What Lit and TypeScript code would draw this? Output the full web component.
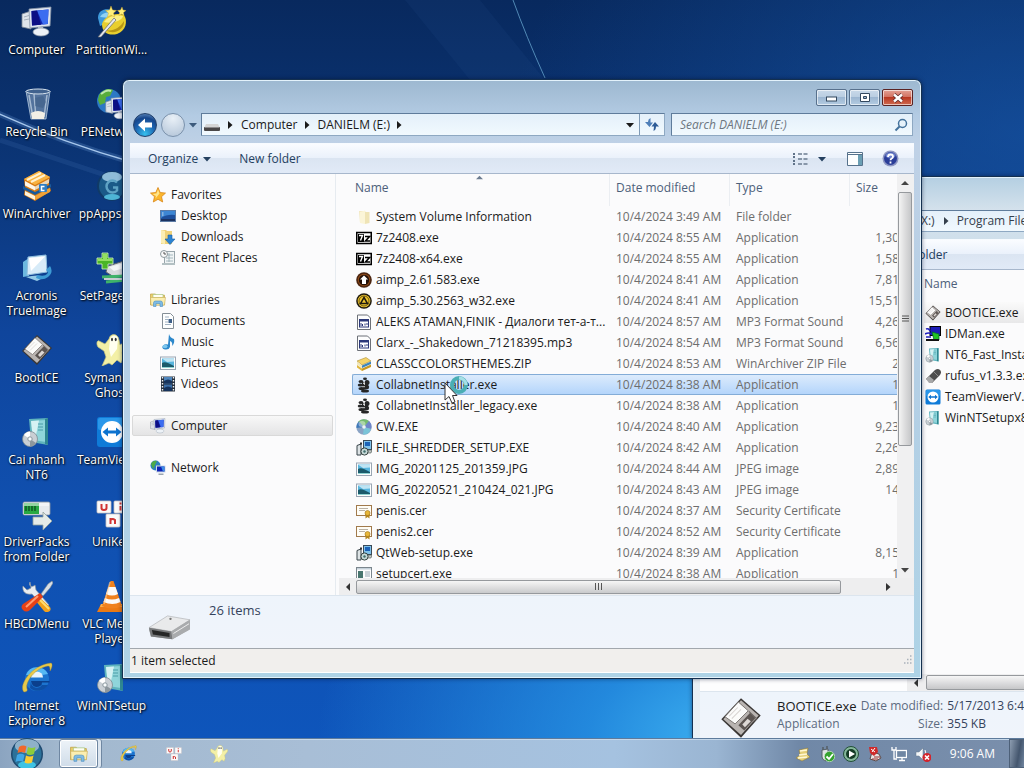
import { LitElement, html, svg, css, TemplateResult } from "lit";
import { customElement, property } from "lit/decorators.js";

const floppy = svg`
  <path d="M16 1 31 14 16 31 1 17Z" fill="#3a3634"/>
  <path d="M16 2.500 29.500 14 16 29 2.500 17Z" fill="#b9b4b1"/>
  <path d="M14 3.800 21.500 10.500 11.500 20.500 3.800 15Z" fill="#fbfbfa" stroke="#77716e" stroke-width=".7"/>
  <path d="M7 14.500 13.500 8M9 16.500 16 9.500" stroke="#d8d4d2" stroke-width=".8"/>
  <path d="M23 12 27 16 18.500 25.500 14 21.500Z" fill="#5c5552"/>
  <path d="M21 16.500 23.500 18.500 19 23 17 21Z" fill="#ddd8d5"/>
  <path d="M22 11 28 16.500 25 19" fill="none" stroke="#6b6562" stroke-width=".8"/>`;

const monitor = svg`
  <path d="M1 8 10 5V23L1 21Z" fill="#dfe4ea" stroke="#7d8895" stroke-width=".8"/>
  <path d="M3 11 8 9.500M3 14 8 13" stroke="#97a2ae" stroke-width=".8"/>
  <path d="M8 3 30 1 29 20 9 22Z" fill="#dfe6f0" stroke="#8793a6" stroke-width=".8"/>
  <path d="M10.500 5 27.500 3.500 26.800 18 11 19.500Z" fill="#1329b4"/>
  <path d="M16 4.600 27.500 3.500 26.800 18 22 18.500Z" fill="#3b6df0"/>
  <path d="M10.500 5 16 4.600 20 18.700 11 19.500Z" fill="#0c0f84"/>
  <path d="M17 21h5l1 4h-6z" fill="#b8c2cf"/>
  <ellipse cx="20" cy="26" rx="8" ry="4" fill="#edf2f7" stroke="#8c98a6" stroke-width=".7"/>`;

const serverBox = svg`
  <path d="M8 3 27 2V29L10 26Z" fill="#5fb4bd"/>
  <path d="M10 5 25 4V26L12 24Z" fill="#8fd5da"/>
  <path d="M10 5 18 4.500 14 24 12 24Z" fill="#d6f2f3"/>
  <path d="M24 3 27 2V29L24 28Z" fill="#2f8791"/>
  <path d="M17 8h5M17 11h5M17 14h5" stroke="#4b9da8"/>
  <circle cx="9" cy="23" r="7.500" fill="#c9cfd4" stroke="#7c8a92" stroke-width=".8"/>
  <path d="M9 23 3 19A7.500 7.500 0 0 1 9 15.500Z" fill="#fff"/>
  <path d="M9 23 15 27A7.500 7.500 0 0 1 9 30.500Z" fill="#8d979d"/>
  <circle cx="9" cy="23" r="2.200" fill="#f7fbfc" stroke="#89969d"/>`;

const teamviewer = svg`
  <rect x="1" y="1" width="30" height="30" rx="3" fill="#0f7bd8"/>
  <rect x="2" y="2" width="28" height="12" rx="2" fill="#2a97ea"/>
  <circle cx="16" cy="16" r="11" fill="#fff"/>
  <path d="M6.500 16 12 11.500v3h8v-3l5.500 4.500-5.500 4.500v-3h-8v3z" fill="#0d73cf"/>`;

const ie = svg`
  <circle cx="16" cy="17" r="12" fill="#1c74cf"/>
  <path d="M5 13a12 12 0 0 1 22-1l-6 1a6 6 0 0 0-11 0z" fill="#55b8f3"/>
  <path d="M10 15.500h12a6 6 0 0 0-12 0z" fill="#e8f4fd"/>
  <path d="M10 19h18.500v1.500H21l-.5 2.500q-4 3.500-8 1-2-2-2.500-5z" fill="#0b3f8c"/>
  <path d="M10 19a6 6 0 0 0 11 4h6a12 12 0 0 1-18 3z" fill="#0d4fa6"/>
  <path d="M3 30C-3 24 10 3 30 1c2 1 1 5-1 8 0-3 0-5-2-5C14 6 4 20 6 27c1 2-1 3-3 3z" fill="#e8c94b" stroke="#a78a2a" stroke-width=".4"/>`;

const ghost = svg`
  <path d="M13 5c1-6 9-6 10 1l1 5 5-3c3-1 3 2 2 4l-5 6 1 6-2 5-4-3-5 5-3-2-7 3 4-9-2-6-6-4C0 10 1 6 3 7l6 3z" fill="#f3f0a6" stroke="#c9c67c" stroke-width=".7"/>
  <path d="M14 5c1-4 7-5 8 0l-1 10-6 8-2-8z" fill="#fffff0"/>
  <ellipse cx="16" cy="5.500" rx="1" ry="1.700" fill="#333"/><ellipse cx="19.700" cy="5.500" rx="1" ry="1.700" fill="#333"/>`;

const unikey = svg`
  <g fill="#fafafa" stroke="#c9c3c3" stroke-width=".8">
  <rect x="1" y="3" width="14" height="12" rx="1"/><rect x="18" y="3" width="13" height="12" rx="1"/>
  <rect x="10" y="16" width="14" height="13" rx="1"/></g>
  <g fill="none" stroke="#d03434" stroke-width="2"><path d="M5.500 6v4q0 2 2.500 2t2.500-2V6M24.500 8v4.500M24.500 4.500v2M14.500 26V20M14.500 22q2-2 4.500 0v4"/></g>`;

const collab = svg`
  <g fill="#262626"><ellipse cx="9" cy="1.800" rx="2" ry="1.200"/><ellipse cx="5" cy="4.500" rx="2.500" ry="1.500"/>
  <ellipse cx="11" cy="5.500" rx="2.500" ry="2.500"/><ellipse cx="4.500" cy="8" rx="2.800" ry="1.500"/><path d="M6 5 12 6 12.500 12 6 13z"/>
  <ellipse cx="10.500" cy="10" rx="2.700" ry="2"/><ellipse cx="5.500" cy="11.500" rx="3" ry="1.500"/><ellipse cx="9" cy="14" rx="4" ry="1.500"/></g>
  <path d="M8 3.500 8.500 8M7 6.500h2M6 9.700h3" stroke="#eee" stroke-width=".8"/>`;

const jpeg = svg`<rect x=".5" y="2" width="15" height="12.500" fill="#fdfdfd" stroke="#9aa6b3"/>
  <rect x="2" y="3.500" width="12" height="9.500" fill="#58b5dd"/>
  <path d="M2 3.500h12v3L7 7z" fill="#bfe4f3"/><path d="M2 8c3-2 6 0 12 3v2H2z" fill="#1b5a6b"/><path d="M2 12h12v1H2z" fill="#8fd3d2"/>`;

const cert = svg`<rect x=".5" y="2.500" width="15" height="10" fill="#fffdf6" stroke="#a17a4c"/>
  <path d="M3 5.500h9M3 7.500h6" stroke="#a89e90" stroke-width=".8"/>
  <path d="M9.500 11v4.500l2-1.500 2 1.500V11z" fill="#b5861c"/><circle cx="11.500" cy="10" r="2.500" fill="#e8b637" stroke="#9a7016" stroke-width=".6"/>`;

const setup = svg`<rect x="7.500" y=".5" width="8" height="9" fill="#7fc1ea" stroke="#3a4a58"/>
  <rect x="9" y="2" width="5" height="4" fill="#1c63b8"/><path d="M8 10h8l-1 3H8z" fill="#c2c8c6" stroke="#48524f" stroke-width=".6"/>
  <path d="M1 5.500 5 4v11H1z" fill="#dde3e5" stroke="#39444a"/><circle cx="8.500" cy="11.500" r="3.600" fill="#c7d9d8" stroke="#35423f"/>
  <circle cx="8.500" cy="11.500" r="1.200" fill="#3f6d6b"/><path d="M5 2v3M4 3.500h2" stroke="#333"/>`;

const sevenZip = svg`<rect x=".75" y="2.500" width="14.500" height="11" fill="#fff" stroke="#000" stroke-width="1.500"/><rect x="2" y="4" width="6" height="8" fill="#000"/>
  <path d="M3 5.500h3.500L4.500 10.500" fill="none" stroke="#fff" stroke-width="1.400"/>
  <path d="M9 6.500h4.500L9.500 11H14" fill="none" stroke="#000" stroke-width="1.600"/>`;

const mp3 = svg`<path d="M1.500 1h10l3 3v11.500h-13z" fill="#fdfdfd" stroke="#6d7178"/>
  <rect x="3.500" y="5.500" width="9" height="7.500" fill="#fff" stroke="#2c3878"/><path d="M3 5.500h10v2H3z" fill="#2c3878"/>
  <path d="M5 9v3M6.500 10v2M9 9.500v2M11 9v2" stroke="#2c3878"/>`;

const winarchiver = svg`
  <path d="M3 9 18 1 29 7 28 13 30 21 14 31 3 25 4 18Z" fill="#d77a14"/>
  <path d="M3 9 18 1 29 7 14 15Z" fill="#f9b341"/><path d="M6 10 20 3M10 12 24 5" stroke="#fff1cf" stroke-width="2"/>
  <path d="M4 11 14 16.500v4L4 15.500z" fill="#fff6e6"/><path d="M14 16.500 28 9v4l-14 7z" fill="#ead8bb"/>
  <path d="M2 16l12 6 16-8v3l-16 8-12-6z" fill="#195a9c"/><path d="M4 21l10 5v4L4 25z" fill="#fff3dc"/>
  <path d="M14 26 29 18v4L14 30z" fill="#f0a339"/><rect x="18" y="14" width="8" height="8" rx="1" fill="#2f7dc2"/><path d="M23.500 16.500h-3v4h3" stroke="#fff" fill="none" stroke-width="1.500"/>`;

const zip = svg`<path d="M1 5 10 1.500 15 5 6 9Z" fill="#f5d46a" stroke="#9c7d1f" stroke-width=".5"/>
  <path d="M1 5.500 6 9.500V12L1 8.500z" fill="#f2e7b9"/><path d="M6 9.500 15 5.500V8L6 12z" fill="#3d85bd"/>
  <path d="M1 9 6 12.500V15L1 11.500z" fill="#e0b63e"/><path d="M6 12.500 15 8.500V11L6 15z" fill="#c89824"/>`;

const folder = svg`<path d="M3 2h6l1 1.500h3V14H4z" fill="#f3e9c0"/><path d="M4 3 9 1.500V15L4 14z" fill="#fbf5d8"/><path d="M9 3h4.500v11L9 15z" fill="#efe4b6"/>`;

const libraries = svg`<path d="M.5 2h5l1 1.200h8V13H.5z" fill="#edcf6c" stroke="#c0a044" stroke-width=".7"/><path d="M3 2.500h10v3H3z" fill="#fffef2" stroke="#9cc27a" stroke-width=".6"/>
  <path d="M.5 5.500h15l-1 7.500H1z" fill="#fbeeb0" stroke="#cdb05a" stroke-width=".6"/>
  <path d="M3.500 14.500V11q0-2 2-2h5q2 0 2 2v3.500h-2.500V11.500H6v3z" fill="#7fbbe4" stroke="#4a8fc2" stroke-width=".6"/>`;

/* Glyphs keyed by name, with the side length of the square they are drawn in. */
const glyphs: Record<string, [number, unknown]> = {
  floppy: [32, floppy],
  monitor: [32, monitor],
  serverBox: [32, serverBox],
  teamviewer: [32, teamviewer],
  ie: [32, ie],
  ghost: [32, ghost],
  unikey: [32, unikey],
  winarchiver: [32, winarchiver],
  collab: [16, collab],
  jpeg: [16, jpeg],
  cert: [16, cert],
  setup: [16, setup],
  sevenZip: [16, sevenZip],
  mp3: [16, mp3],
  zip: [16, zip],
  folder: [16, folder],
  libraries: [16, libraries],
  partition: [32, svg`
    <path d="M2 12C2 4 9 2 17 4l-3 12-10 4z" fill="#3f9adb"/><path d="M4 11c3-5 8-5 12-4l-2 5z" fill="#8fd2f4"/>
    <path d="M6 18c2-8 14-12 22-9 4 6 2 16-7 19-8 2-15-1-15-10z" fill="#e9cf2e"/>
    <path d="M8 16c4-6 13-8 19-6-1 5-11 8-19 6z" fill="#fbf086"/><path d="M10 24c6 2 14-2 18-9 1 8-10 15-18 9z" fill="#b89715"/>
    <path d="M2 31 18 12l2 2L5 31z" fill="#e6e9ee" stroke="#62656c" stroke-width=".7"/>
    <path d="m15 0 1.500 4 4 .5-3 2.500 1 4-3.500-2-3.500 2 1-4-3-2.500 4-.5zM26 1l1 3 3 .5-2.500 2 .5 3-2.500-1.500L23 9.500l.5-3-2-2 3-.5z" fill="#fff07a" stroke="#d3a51e" stroke-width=".4"/>`],
  recycle: [32, svg`
    <path d="M5 3h24l-4 28H10z" fill="#8fa9c4" fill-opacity=".55" stroke="#b8cce0" stroke-width=".8"/>
    <path d="M8 7 12 30M13 6l2 24M26 7l-3 22" stroke="#dbe7f3" stroke-opacity=".6" stroke-width="1.500"/>
    <path d="M14 10 22 8 25 14 22 20 14 18z" fill="#3c5b84" fill-opacity=".5"/>
    <path d="M10 25q7-4 14 0l-1 6H11z" fill="#f2efe6"/>
    <ellipse cx="17" cy="3.500" rx="12" ry="2.500" fill="#41628e" stroke="#d5e1ec"/>`],
  penetwork: [32, svg`
    <circle cx="13" cy="13" r="12" fill="#2c78c5"/><path d="M3 7c4-6 10-7 14-5l-3 6-4 1-1 6-5 2-2-5zM15 15l5-3 4 4-6 8-4-1z" fill="#57ad3c"/>
    <path d="M5 6q6-5 10-3" stroke="#bfe7b0" fill="none" stroke-width="2"/>
    <g transform="translate(9 8) scale(.76)">${monitor}</g>`],
  ppapps: [32, svg`
    <circle cx="16" cy="16" r="15" fill="#103a66"/><circle cx="16" cy="16" r="13" fill="#1b5a88"/>
    <ellipse cx="16" cy="7" rx="10" ry="5" fill="#8fbcd8"/><path d="M21 12.500a6 6 0 1 0 0 8v-3h-4" fill="none" stroke="#5ea3c4" stroke-width="2.500"/><ellipse cx="16" cy="27" rx="8" ry="3" fill="#4eb5d6"/>`],
  acronis: [32, svg`
    <path d="M2 10 8 6V24L2 25z" fill="#6cb8df"/><path d="M7 5 25 3 26 20 6 23z" fill="#d7ebf8" stroke="#8fbedd"/>
    <path d="M8 6 24 4.500 10 19z" fill="#fff"/><path d="M5 25q12-3 19 0l-8 4z" fill="#94cbe8"/>
    <path d="M29 14q4 6-2 11-5 4-12 1l1-3q8 2 10-1 2-2-1-4z" fill="#3d9bd4"/>`],
  setpage: [32, svg`
    <path d="M12 14 28 9 32 14V22L18 25 10 20z" fill="#d7dade" stroke="#60666c"/><path d="M13 15 28 11 31 15 18 19z" fill="#f4f6f7"/>
    <path d="M6 25 30 24M10 30 30 28" stroke="#3fb36a" stroke-width="3"/><path d="M8 27h20" stroke="#c7cdd1" stroke-width="2"/>
    <path d="M6 1h6v5h5v6h-5v5H6v-5H1V6h5z" fill="#4ab526" stroke="#d9f5c3" stroke-width=".8"/><path d="M7 2h4v5h5v2H2V7h5z" fill="#93de62"/>`],
  driver: [32, svg`
    <rect x="2" y="4" width="27" height="13" rx="1.500" fill="#e7ebee" stroke="#929ba2" stroke-width=".8"/><rect x="3" y="5" width="15" height="11" fill="#28a942"/>
    <path d="M5 8v5M8 8v5M11 8v5M14 8v5" stroke="#14642a" stroke-width="1.800"/><path d="M3 5h25v3H3z" fill="#fff" fill-opacity=".5"/>
    <path d="M12 19h10v-5l9 9-9 9v-5H12z" fill="#e4ebe8" stroke="#93a19d" stroke-width=".8"/>`],
  tools: [32, svg`
    <path d="M9 2c-2 4 2 6 5 3l1 5 13 15-4 4L11 14C5 15 1 12 2 6l4 4 4-2-1-6z" fill="#e9edf1" stroke="#8c979f" stroke-width=".7"/>
    <path d="M18 17 29 27q2 4-2 5-2 1-4-1L14 20z" fill="#f2a01c"/><path d="M18 19 28 29" stroke="#ffdc70" stroke-width="2"/>
    <path d="M20 14 27 4 31 1l1 2-3 5-7 8z" fill="#d7dee4" stroke="#7d868d" stroke-width=".6"/>
    <path d="M19 13 22 17 9 30q-4 3-7 0t0-6z" fill="#e64116"/><path d="M17 16 5 27" stroke="#ff9c72" stroke-width="2"/>`],
  vlc: [32, svg`
    <path d="M5 24 27 24 31 32H1z" fill="#ec7a14"/><path d="M5 24h22l1 3H4z" fill="#fbb04c"/>
    <path d="M14.500 1h3L26 26q-10 5-20 0z" fill="#f0811d"/><path d="M12.500 7h7l2.500 7q-6 3-12 0zM9 18q7 3 14 0l1.500 4q-8 4-17 0z" fill="#fafafa"/>
    <path d="M14 2 8 24" stroke="#ffd09a" stroke-opacity=".6" stroke-width="1.500"/>`],
  drive: [44, svg`
    <path d="M1 18 20 6 42 9V18L25 28 3 25z" fill="#a5a7a9"/><path d="M1 16 20 4 43 8 24 20z" fill="#e9eaeb" stroke="#b1b3b5" stroke-width=".7"/>
    <path d="M1 16 24 20 25 28 3 25z" fill="#77797b"/><path d="M4 18.500 22 21.500 22 25.500 5 23z" fill="#262727"/>
    <path d="M24 20 43 8V18L25 28z" fill="#a9abad"/><path d="M26 22 42 12" stroke="#eee"/><circle cx="23" cy="7" r="1.200" fill="#777"/>`],
  driveSmall: [16, svg`<path d="M2 7h12l2 4H0z" fill="#d5d5d5"/><rect x="0" y="10" width="16" height="4" rx="1" fill="#4a4748"/><path d="M1 10.500h14" stroke="#8d8b8c"/>`],
  star: [16, svg`<path d="m8 .5 2.200 5 5.300.600-4 3.600 1.200 5.300L8 12.300 3.300 15l1.200-5.300-4-3.600 5.300-.600z" fill="#fbb62c" stroke="#d98718" stroke-width=".8"/><path d="m8 2.500 1.500 4-4 5L6 9 2.500 7l4-.500z" fill="#ffe58c"/>`],
  desktop: [16, svg`<rect x=".5" y="2.500" width="15" height="11" fill="#1d4f9c" stroke="#5c7ba5"/><path d="M1 3h14v4Q7 6 1 10z" fill="#3d86d3"/><path d="M1 11h14v2H1z" fill="#1b3260"/><path d="M2 5h1.500M2 7h1.500" stroke="#cde"/>`],
  downloads: [16, svg`<path d="M1 1h5l1 1h5v13H1z" fill="#efd27a"/><path d="M1 1 5 2v13.500L1 14z" fill="#fbeeb4"/><path d="M8 6h4v4h3l-5 5.500L5 10h3z" fill="#2b83d2" stroke="#1b5fa5" stroke-width=".6"/>`],
  recent: [16, svg`<rect x="4.500" y="1.500" width="10" height="12" fill="#f0f4f5" stroke="#98a5ab"/><path d="M6 5h7M6 8h7M6 11h7M9 3v9" stroke="#96abb3" stroke-width=".8"/><circle cx="4" cy="4" r="3.500" fill="#fafafa" stroke="#8d989d"/><path d="M4 2v2h2" stroke="#555" fill="none"/><path d="M2 13h13v2H2z" fill="#b3c0c3"/>`],
  documents: [16, svg`<path d="M2.500.5h8l3 3v12h-11z" fill="#fdfefe" stroke="#848e96"/><path d="M5 4h4M5 6.500h3M5 9h3M5 11.500h6" stroke="#8aa0b4" stroke-width=".8"/><rect x="8.500" y="6" width="3.500" height="4" fill="#3d5f88"/>`],
  music: [16, svg`<path d="M9 0q1 4 5 5 1 4-2 7 1-4-2-5v6q-1 3-5 2.500-4-1-2-4 2-2 5-1z" fill="#2d88cb"/><ellipse cx="5" cy="12.500" rx="2.500" ry="1.800" fill="#7cc7ef"/>`],
  videos: [16, svg`<path d="M1 .5h14v15H1z" fill="#26303e"/><path d="M2.500 1v14M13.500 1v14" stroke="#f1f4f6" stroke-width="1.400" stroke-dasharray="1.500 1.500"/><rect x="4" y="1" width="8" height="6.500" fill="#4f86bd"/><rect x="4" y="8.500" width="8" height="6.500" fill="#3b6ea8"/><path d="M4 5q4-3 8 0v2.500H4zM4 12q4-3 8 0v3H4z" fill="#16335c"/>`],
  network: [16, svg`<circle cx="5.500" cy="5.500" r="5" fill="#2c7fc1"/><path d="M1 4q2-4 6-3L5 5 3 9zM6 6l3-1v4z" fill="#4dab47"/><path d="M6 5.500h9.500v7H6z" fill="#cfd9e8"/><path d="M7 6.500h7.500v5H7z" fill="#0d22b4"/><path d="M11 6.500h3.500v5H13z" fill="#3b8be8"/><path d="M8.500 13.500h5v1.500h-5z" fill="#9aa5b1"/>`],
  aimp2: [16, svg`<circle cx="8" cy="8" r="7.800" fill="#4a2410"/><circle cx="8" cy="8" r="6.200" fill="#8e4a18"/><circle cx="8" cy="8" r="5.200" fill="#231008"/><path d="M8 3.500 12 7.500h-2V12H6V7.500H4z" fill="#fff"/>`],
  aimp5: [16, svg`<circle cx="8" cy="8" r="7.800" fill="#1f1a10"/><circle cx="8" cy="8" r="6.300" fill="#f1c72e"/><circle cx="8" cy="8" r="5" fill="none" stroke="#4a3b0b" stroke-width=".8"/><path d="M8 4.500 11.500 10.500H4.500z" fill="none" stroke="#1f1a10" stroke-width="1.500"/>`],
  cw: [16, svg`<circle cx="8" cy="8" r="7.700" fill="#8aa3c4"/><path d="M8 8 2 3A8 8 0 0 1 13 2z" fill="#76bb6f"/><path d="M8 8 13 2a8 8 0 0 1 2 8z" fill="#6e86c9"/><path d="M8 8 15 10a8 8 0 0 1-8 5.500z" fill="#7ac4d8"/><path d="M8 8 .5 9A8 8 0 0 1 3 2.500z" fill="#3e79b9"/><ellipse cx="6" cy="5" rx="3.500" ry="3" fill="#fff" fill-opacity=".4"/><circle cx="8" cy="8" r="1.800" fill="#edf3f8"/>`],
  app: [16, svg`<rect x=".5" y="1.500" width="15" height="12" fill="#fdfdfd" stroke="#7b868d"/><path d="M1 2h14v1.500H1z" fill="#c5d1da"/><rect x="2" y="5" width="5" height="7" fill="#49766f"/><path d="M9 6h5M9 8h5M9 10h5" stroke="#98a8b3"/>`],
  idman: [16, svg`<rect x="5" y=".5" width="10.500" height="9" fill="#1b1bb5" stroke="#000"/><path d="M7 6 14 8v6H9z" fill="#21c321" stroke="#063" stroke-width=".8"/><path d="M1 3q3-1 4 2M0 8q4-2 6 0M1 11h5" stroke="#2020c0" stroke-width="1.600" fill="none"/><path d="M1 13h13v2H1z" fill="#111"/>`],
  rufus: [16, svg`<path d="M1 11 10 2q3-2 5 0t0 5L7 15z" fill="#4d4d4d"/><path d="M1 11 4 8 9 12 7 15H4z" fill="#a7a8a9"/><path d="M9 4 13 8" stroke="#8a8a8a"/>`],
  tray1: [16, svg`<path d="M4 4 13 2 12 8 15 11 7 15 1 12 5 9z" fill="#e4cf78" stroke="#8a7436" stroke-width=".5"/><path d="M5 5 12 4M4 9 12 8M3 12 12 11" stroke="#fff8d5" stroke-width="1.300"/>`],
  tray2: [16, svg`<path d="M3 4v7q0 3 4 4l2-9V3z" fill="#dfe3e6" stroke="#555f67"/><path d="M4 1v3M8 0v3" stroke="#555f67" stroke-width="1.500"/><circle cx="10.500" cy="10.500" r="5.200" fill="#35a22f" stroke="#e5f4e2" stroke-width=".6"/><path d="M7.500 10.500 10 13l4-5" stroke="#fff" stroke-width="1.800" fill="none"/>`],
  tray3: [16, svg`<circle cx="8" cy="8" r="7.500" fill="#84b79a" stroke="#224f38"/><circle cx="8" cy="8" r="5" fill="#133b25"/><path d="M6 4.500 12 8l-6 3.500z" fill="#fff"/>`],
  tray4: [16, svg`<path d="M5 6 12 8 14 12 9 15 3 13z" fill="#e8e5e5" stroke="#5c4a4a"/><path d="M2 1h8l1 5-4 4-4-3z" fill="#cf2a2a"/><path d="M4 3l4 3M8 2 5 6" stroke="#fff"/><path d="M7 11h6M5 13h6" stroke="#9b3030"/>`],
  tray5: [16, svg`<rect x="5.500" y="4.500" width="10" height="7" fill="#6f86a3" stroke="#fff" stroke-width="1.300"/><path d="M8 14.500h6M11 12v2" stroke="#fff" stroke-width="1.300"/><path d="M1 1v3h4V1M3 4v9h3" stroke="#fff" stroke-width="1.300" fill="none"/>`],
  tray6: [16, svg`<path d="M1 6h3l4-4v12l-4-4H1z" fill="#f5f7f9" stroke="#66788c" stroke-width=".5"/><path d="M10 4q1.500 3 0 6" stroke="#fff" fill="none"/><circle cx="12" cy="11.500" r="4.500" fill="#d3242c"/><path d="M10 9.500l4 4M14 9.500l-4 4" stroke="#fff" stroke-width="1.600"/>`],
};

const icon = (name: string, size: number): TemplateResult => {
  const [side, body] = glyphs[name];
  return html`<svg width=${size} height=${size} viewBox="0 0 ${side} ${side}" aria-hidden="true">${body}</svg>`;
};

const tri = (dir: "up" | "down" | "left" | "right", size = 8) => {
  const d = { up: "M0 6 4 2 8 6z", down: "M0 2h8L4 6.500z", left: "M6 0v8L2 4z", right: "M2 0v8l4.500-4z" }[dir];
  return html`<svg width=${size} height=${size} viewBox="0 0 8 8" aria-hidden="true"><path d=${d} fill="currentColor" /></svg>`;
};

const shared = css`
  * { box-sizing: border-box; }
  svg { display: block; flex: none; }
  button {
    font: inherit; color: inherit; background: none; border: 0; padding: 0; margin: 0;
    display: flex; align-items: center; justify-content: center;
  }
  a { color: inherit; text-decoration: none; }
  .frame {
    height: 100%; display: flex; flex-direction: column; border: 1px solid #14304f;
    border-radius: 7px 7px 0 0; box-shadow: inset 0 0 0 1px #e3f2fb, 0 0 4px rgba(0, 10, 40, .5);
    background: linear-gradient(180deg, #9db8d0 0, #b3cbe3 36px, #bfd1e6 64px, #b4cfe5 50%, #aed3e6 100%);
    padding: 0 7px 5px; font-size: 12px; line-height: 16px;
  }
  .field {
    display: flex; align-items: center; height: 23px; color: #1a1a1a;
    border: 1px solid #5f7c9b; border-right-color: #8ea8c2; border-bottom-color: #8ea8c2;
    background: linear-gradient(180deg, #e4f0fa, #f1f9fe);
  }
  .toolbar {
    height: 31px; flex: none; display: flex; align-items: center; color: #24405f;
    border-top: 1px solid #f7fbff; border-bottom: 1px solid #a7b7cc;
    background: linear-gradient(180deg, #fafcff 0, #eaf1fb 48%, #dbe5f2 50%, #e1eaf7 100%);
  }
  .client { flex: 1; min-height: 0; display: flex; flex-direction: column; background: #fbfbfc; }
  .hbar { height: 17px; flex: none; display: flex; align-items: center; background: #eeeeef; color: #333; }
  .hbar button { width: 17px; height: 17px; }
  .thumb { border: 1px solid #96999d; border-radius: 2px; display: flex; align-items: center; justify-content: center; }
  .grip { width: 7px; height: 7px; }
  .details { flex: none; display: flex; border-top: 1px solid #dce5ee; background: linear-gradient(180deg, #eef4fb, #f0f4fb); color: #35435c; font-size: 13px; }
`;

interface FileRow { icon: string; name: string; date: string; type: string; size: string; }

const rows: FileRow[] = (
  [
    ["folder", "System Volume Information", "3:49", "File folder", ""],
    ["sevenZip", "7z2408.exe", "8:55", "Application", "1,30"],
    ["sevenZip", "7z2408-x64.exe", "8:55", "Application", "1,58"],
    ["aimp2", "aimp_2.61.583.exe", "8:41", "Application", "7,81"],
    ["aimp5", "aimp_5.30.2563_w32.exe", "8:41", "Application", "15,51"],
    ["mp3", "ALEKS ATAMAN,FINIK - Диалоги тет-а-т...", "8:57", "MP3 Format Sound", "4,26"],
    ["mp3", "Clarx_-_Shakedown_71218395.mp3", "8:54", "MP3 Format Sound", "6,56"],
    ["zip", "CLASSCCOLORSTHEMES.ZIP", "8:53", "WinArchiver ZIP File", "2"],
    ["collab", "CollabnetInstaller.exe", "8:38", "Application", "1"],
    ["collab", "CollabnetInstaller_legacy.exe", "8:38", "Application", "1"],
    ["cw", "CW.EXE", "8:40", "Application", "9,23"],
    ["setup", "FILE_SHREDDER_SETUP.EXE", "8:42", "Application", "2,26"],
    ["jpeg", "IMG_20201125_201359.JPG", "8:44", "JPEG image", "2,89"],
    ["jpeg", "IMG_20220521_210424_021.JPG", "8:43", "JPEG image", "14"],
    ["cert", "penis.cer", "8:37", "Security Certificate", ""],
    ["cert", "penis2.cer", "8:52", "Security Certificate", ""],
    ["setup", "QtWeb-setup.exe", "8:39", "Application", "8,15"],
    ["app", "setupcert.exe", "8:38", "Application", "1"],
  ] as const
).map(([icon, name, time, type, size]) => ({ icon, name, date: `10/4/2024 ${time} AM`, type, size }));

const navGroups: { icon: string; label: string; current?: boolean; items?: [string, string][] }[] = [
  { icon: "star", label: "Favorites", items: [["desktop", "Desktop"], ["downloads", "Downloads"], ["recent", "Recent Places"]] },
  { icon: "libraries", label: "Libraries", items: [["documents", "Documents"], ["music", "Music"], ["jpeg", "Pictures"], ["videos", "Videos"]] },
  { icon: "monitor", label: "Computer", current: true },
  { icon: "network", label: "Network" },
];

@customElement("explorer-window")
export class ExplorerWindow extends LitElement {
  @property({ type: Number }) selected = 8;

  static styles = [shared, css`
    :host { display: block; }
    .caption { height: 33px; flex: none; display: flex; justify-content: flex-end; gap: 2px; padding: 9px 1px 0 0; }
    .caption button {
      width: 31px; height: 17px; border: 1px solid #58718d; border-radius: 2px; color: #33485f;
      box-shadow: inset 0 0 0 1px rgba(255, 255, 255, .6);
      background: linear-gradient(180deg, #c9d9e9 0, #b9cde1 48%, #9cb6d1 50%, #b4cce2 100%);
    }
    .caption .close { border-color: #5a2323; background: linear-gradient(180deg, #e3a195 0, #d2705f 48%, #b93822 50%, #cf6a50 100%); }
    .nav { height: 30px; flex: none; display: flex; align-items: center; padding: 0 1px 7px 3px; }
    .round { width: 24px; height: 24px; border-radius: 50%; flex: none; border: 1px solid #54708f; }
    .back { background: radial-gradient(circle at 50% 90%, #35c0ee 0, #1c63b0 45%, #16468c 70%, #7aa3cf 100%); border-color: #23416b; }
    .fwd { margin-left: 4px; background: radial-gradient(circle at 50% 20%, #e9f0f7, #b1c3d7); border-color: #7b92ac; }
    .recent { margin: 0 4px; width: 8px; color: #3d5b7c; }
    .path { flex: 1; min-width: 0; padding-left: 2px; }
    .path .gap { width: 6px; }
    .path a { margin: 0 5px 0 7px; white-space: nowrap; }
    .path .drop { margin-left: auto; width: 19px; height: 21px; }
    .path .refresh { width: 25px; height: 21px; border-left: 1px solid #7f9ab6; }
    .search { width: 242px; margin-left: 6px; padding: 0 4px 0 8px; flex: none; }
    .search input { flex: 1; min-width: 0; border: 0; padding: 0; background: none; outline: 0; font: inherit; font-style: italic; }
    .search input::placeholder { color: #6d7680; opacity: 1; }
    .toolbar { padding: 0 15px 0 18px; }
    .toolbar .menu { gap: 5px; margin-right: 28px; }
    .toolbar .push { margin-left: auto; gap: 10px; margin-right: 21px; }
    .toolbar .help { margin-left: 19px; }
    .panes { flex: 1; min-height: 0; display: flex; }
    .tree { width: 206px; flex: none; padding: 10px 2px 0; border-right: 1px solid #e6ebf0; }
    .tree ul { list-style: none; margin: 0 0 21px; padding: 0; }
    .tree a { display: flex; align-items: center; gap: 5px; height: 21px; padding-left: 17px; color: #1c1c1c; border: 1px solid transparent; }
    .tree ul ul { margin: 0; }
    .tree ul ul a { padding-left: 27px; }
    .tree a.current { border-color: #d9d9d9; border-radius: 2px; background: linear-gradient(180deg, #f8f8f8, #e4e4e5); }
    .content { flex: 1; min-width: 0; display: flex; flex-direction: column; padding-left: 3px; }
    .listing { flex: 1; min-height: 0; display: flex; }
    .scrollport { flex: 1; min-width: 0; overflow: hidden; padding-left: 13px; }
    table { border-collapse: separate; border-spacing: 0; table-layout: fixed; width: 547px; }
    th { height: 32px; padding: 0 0 4px 6px; font-weight: normal; text-align: left; color: #4c607a; border-right: 1px solid #ebeef2; white-space: nowrap; }
    th:first-child { padding-left: 3px; position: relative; }
    .mark { position: absolute; left: 50%; margin-left: -5px; top: 0; color: #6c7c90; }
    .c-name { width: 258px; }
    .c-date, .c-type { width: 120px; }
    td { height: 21px; padding: 0 0 0 6px; color: #6d6d6d; white-space: nowrap; }
    td:first-child { padding-left: 4px; color: #1a1a1a; }
    td:last-child { text-align: right; padding: 0; }
    td .cell { display: flex; align-items: center; gap: 4px; }
    tr.selected td { border: 1px solid #83acd7; border-width: 1px 0; background: linear-gradient(180deg, #dcebfc, #b4d5fb); }
    tr.selected td:first-child { border-left-width: 1px; padding-left: 3px; border-radius: 2px 0 0 2px; }
    .vbar { width: 17px; flex: none; display: flex; flex-direction: column; align-items: center; background: #f0f0f1; color: #444; padding: 1px 1px 0 0; }
    .vbar button { width: 16px; height: 16px; }
    .vbar .down { margin-top: auto; }
    .vbar .thumb { width: 14px; flex: none; height: 63%; margin-top: 1px; background: linear-gradient(90deg, #f4f4f4, #dcdcdd 50%, #c6c7c9); }
    .hbar { padding-right: 18px; }
    .hbar .thumb { flex: none; width: 87%; height: 14px; background: linear-gradient(180deg, #f6f6f6, #e0e0e1 50%, #c9cacc); }
    .hbar .end { margin-left: auto; }
    .details { height: 53px; gap: 18px; padding: 5px 18px; }
    .details svg { margin-top: 11px; }
    .details p { margin: 1px 0; }
    .status { height: 25px; flex: none; display: flex; align-items: center; justify-content: space-between; padding: 0 2px 0 1px; border-top: 1px solid #a2a7ad; background: #f1efed; color: #1a1a1a; border-bottom: 1px solid #fff; }
  `];

  render() {
    return html`<section class="frame" aria-label="DANIELM (E:)">
      <header class="caption">
        <button aria-label="Minimize"><svg width="14" height="9" viewBox="0 0 14 9"><rect x="1.500" y="4" width="10" height="4" fill="#fff" stroke="currentColor" /></svg></button>
        <button aria-label="Maximize"><svg width="12" height="9" viewBox="0 0 12 9"><path d="M1.500.5h9v8h-9z" fill="#fff" stroke="currentColor" /><path d="M4.500 3.500h3v2h-3z" fill="#9cb6d1" stroke="currentColor" /></svg></button>
        <button class="close" aria-label="Close"><svg width="12" height="10" viewBox="0 0 12 10"><path d="M2 1.500 10 8.500M10 1.500 2 8.500" stroke="#5b2a2a" stroke-width="4" /><path d="M2 1.500 10 8.500M10 1.500 2 8.500" stroke="#fff" stroke-width="2.400" /></svg></button>
      </header>
      <nav class="nav">
        <button class="round back" aria-label="Back"><svg width="16" height="14" viewBox="0 0 16 14"><path d="M1 7 8 .5v4h7v5H8v4z" fill="#fff" /></svg></button>
        <button class="round fwd" aria-label="Forward"></button>
        <button class="recent" aria-label="Recent pages">${tri("down")}</button>
        <div class="field path">
          ${icon("driveSmall", 16)}<span class="gap"></span>${tri("right")}
          <a href="#computer">Computer</a>${tri("right")}<a href="#e">DANIELM (E:)</a>${tri("right")}
          <button class="drop" aria-label="Previous locations">${tri("down")}</button>
          <button class="refresh" aria-label="Refresh"><svg width="14" height="13" viewBox="0 0 14 13"><path d="M5.500 0Q3 1 3 4H0l4.500 5L8 4.500H5.500z" fill="#4f7fb8" /><path d="M8.500 13Q11 12 11 8.500h3L10 4 6.500 8.500H9z" fill="#2f5c96" /></svg></button>
        </div>
        <label class="field search"><input type="text" aria-label="Search" placeholder="Search DANIELM (E:)" />
          <svg width="14" height="14" viewBox="0 0 14 14"><circle cx="8.500" cy="5.500" r="4" fill="#e6f2fa" stroke="#44729c" stroke-width="1.500" /><path d="M5.500 8.500 1.500 12.500" stroke="#44729c" stroke-width="2" /></svg>
        </label>
      </nav>
      <div class="client">
        <div class="toolbar">
          <button class="menu">Organize ${tri("down")}</button>
          <button>New folder</button>
          <button class="push" aria-label="Change view">
            <svg width="16" height="14" viewBox="0 0 16 14"><path d="M1 2h3M1 5h3M1 9h3M1 12h3" stroke="#5f7288" stroke-width="2" stroke-dasharray="2 1" /><path d="M6 2h4M11.500 2h4M6 7h4M11.500 7h4M6 12h4M11.500 12h4" stroke="#6b7c90" stroke-width="1.300" /></svg>
            ${tri("down")}</button>
          <button aria-label="Preview pane"><svg width="16" height="14" viewBox="0 0 16 14"><path d="M.5.5h15v13H.5z" fill="#fdfefe" stroke="#56728c" /><path d="M1 2.500h15" stroke="#56728c" /><path d="M11 3h4v10h-4z" fill="#6b9fb4" /></svg></button>
          <button class="help" aria-label="Help"><svg width="17" height="17" viewBox="0 0 17 17"><circle cx="8.500" cy="8.500" r="8" fill="#8e97c3" /><circle cx="8.500" cy="8.500" r="6.500" fill="#2a3d98" /><ellipse cx="8.500" cy="5.500" rx="5" ry="3" fill="#6c80cd" /><path d="M6 7q0-2.500 2.500-2.500T11 6.700q0 1.300-1.300 1.800-1.200.5-1.200 1.800M8.500 11.500v2" fill="none" stroke="#fff" stroke-width="1.800" /></svg></button>
        </div>
        <div class="panes">
          <nav class="tree" aria-label="Folders">${navGroups.map((g) => html`<ul><li>
            <a href="#${g.label}" class=${g.current ? "current" : ""}>${icon(g.icon, 16)}${g.label}</a>
            ${g.items ? html`<ul>${g.items.map(([i, t]) => html`<li><a href="#${t}">${icon(i, 16)}${t}</a></li>`)}</ul>` : ""}
          </li></ul>`)}</nav>
          <div class="content">
            <div class="listing">
              <div class="scrollport"><table>
                <thead><tr>
                  <th class="c-name">Name<span class="mark">${tri("up", 7)}</span></th><th class="c-date">Date modified</th><th class="c-type">Type</th><th>Size</th>
                </tr></thead>
                <tbody>${rows.map((r, i) => html`<tr class=${i === this.selected ? "selected" : ""}>
                  <td><div class="cell">${icon(r.icon, 16)}<span>${r.name}</span></div></td><td>${r.date}</td><td>${r.type}</td><td>${r.size}</td></tr>`)}</tbody>
              </table></div>
              <div class="vbar"><button aria-label="Scroll up">${tri("up")}</button>
                <div class="thumb"><svg class="grip" viewBox="0 0 7 7"><path d="M0 1h7M0 3.500h7M0 6h7" stroke="#555" /></svg></div>
                <button class="down" aria-label="Scroll down">${tri("down")}</button></div>
            </div>
            <div class="hbar"><button aria-label="Scroll left">${tri("left")}</button>
              <div class="thumb"><svg class="grip" viewBox="0 0 7 7"><path d="M.5 0v7M3.500 0v7M6.500 0v7" stroke="#555" /></svg></div>
              <button class="end" aria-label="Scroll right">${tri("right")}</button></div>
          </div>
        </div>
        <div class="details">${icon("drive", 43)}<p>26 items</p></div>
        <footer class="status"><span>1 item selected</span>
          <svg width="9" height="11" viewBox="0 0 9 11"><path d="M7 1h1.500M4 4.500h1.500M7 4.500h1.500M1 8h1.500M4 8h1.500M7 8h1.500" stroke="#a9b1ba" stroke-width="1.500" /></svg></footer>
      </div>
    </section>`;
  }
}

@customElement("program-window")
export class ProgramWindow extends LitElement {
  static styles = [shared, css`
    :host { display: block; }
    .frame { padding: 33px 7px 0; border-bottom: 0; background: linear-gradient(180deg, #b4cfe2 0, #d5e2ec 34px, #cfdfeb 64px, #e9f0f5 100%); }
    .field { padding-left: 220px; gap: 7px; height: 22px; flex: none; color: #35404c; margin-bottom: 7px; white-space: nowrap; }
    .toolbar { padding-left: 186px; }
    .panes { flex: 1; min-height: 0; display: flex; }
    .tree { width: 207px; flex: none; background: #fdfdfe; }
    .content { flex: 1; min-width: 0; display: flex; flex-direction: column; }
    .listing { flex: 1; min-height: 0; padding: 0 0 0 17px; }
    h3 { margin: 0 0 10px; padding-top: 6px; font-weight: normal; font-size: 12px; color: #4c607a; }
    ul { list-style: none; margin: 0; padding: 0; color: #1a1a1a; }
    li { display: flex; align-items: center; gap: 4px; height: 21px; white-space: nowrap; padding-left: 1px; }
    li:first-child { background: linear-gradient(180deg, #fafafa, #e8e8e9); }
    .hbar .thumb { flex: 1; height: 15px; margin-left: 2px; background: linear-gradient(180deg, #f6f6f6, #dedee0 50%, #c6c7c9); }
    .details { height: 47px; gap: 15px; padding: 5px 0 0 20px; }
    .grid { display: grid; grid-template-columns: auto auto 1fr; column-gap: 4px; row-gap: 2px; margin-top: 1px; white-space: nowrap; align-content: start; font-size: 12px; }
    .grid .title { font-size: 13px; color: #1a1a1a; }
    .grid .label { text-align: right; }
    .grid .muted { color: #5c6b80; }
  `];

  render() {
    const files = [["floppy", "BOOTICE.exe"], ["idman", "IDMan.exe"], ["serverBox", "NT6_Fast_Installer.exe"], ["rufus", "rufus_v1.3.3.exe"], ["teamviewer", "TeamViewerV.exe"], ["serverBox", "WinNTSetupx86.exe"]];
    return html`<section class="frame" aria-label="Program Files">
      <div class="field"><span>X:)</span>${tri("right")}<span>Program Files</span></div>
      <div class="client">
        <div class="toolbar"><button>New folder</button></div>
        <div class="panes"><div class="tree"></div><div class="content">
          <div class="listing"><h3>Name</h3><ul>${files.map(([i, t]) => html`<li>${icon(i, 16)}<span>${t}</span></li>`)}</ul></div>
          <div class="hbar"><button aria-label="Scroll left">${tri("left")}</button><div class="thumb"></div></div>
        </div></div>
        <div class="details">${icon("floppy", 42)}
          <div class="grid"><span class="title">BOOTICE.exe</span><span class="label muted">Date modified:</span><span>5/17/2013 6:44 AM</span>
            <span class="muted">Application</span><span class="label muted">Size:</span><span>355 KB</span></div></div>
      </div>
    </section>`;
  }
}

const shortcuts: [string, string][] = [
  ["monitor", "Computer"], ["recycle", "Recycle Bin"], ["winarchiver", "WinArchiver"], ["acronis", "Acronis TrueImage"], ["floppy", "BootICE"],
  ["serverBox", "Cai nhanh NT6"], ["driver", "DriverPacks from Folder"], ["tools", "HBCDMenu"], ["ie", "Internet Explorer 8"],
  ["partition", "PartitionWi..."], ["penetwork", "PENetwork"], ["ppapps", "ppAppsGen"], ["setpage", "SetPageFile"], ["ghost", "Symantec Ghost"],
  ["teamviewer", "TeamViewer"], ["unikey", "UniKey"], ["vlc", "VLC Media Player"], ["serverBox", "WinNTSetup"],
];

@customElement("app-root")
export class AppRoot extends LitElement {
  static styles = [shared, css`
    :host { display: block; height: 100vh; overflow: hidden; font-family: "Open Sans", "Noto Sans", sans-serif; font-size: 12px; line-height: 15px; }
    .screen { height: 100%; display: flex; flex-direction: column; }
    .desktop {
      flex: 1; min-height: 0; position: relative; overflow: hidden;
      background:
        radial-gradient(ellipse 420px 260px at 72% 100%, #3fb4f2 0, rgba(40, 150, 230, .8) 35%, rgba(20, 100, 210, 0) 100%),
        radial-gradient(ellipse 50% 50% at 100% 18%, rgba(24, 90, 175, .6) 0, rgba(24, 90, 175, 0) 100%),
        linear-gradient(180deg, #08295e 0, #0b3576 22%, #0f459c 45%, #1050b0 70%, #0e55bb 100%);
    }
    .rays { position: absolute; inset: 0; width: 100%; height: 100%; }
    .icons { position: relative; height: 100%; display: grid; grid-auto-flow: column; grid-template-rows: repeat(9, 82px); grid-auto-columns: 75px; justify-content: start; }
    .shortcut { display: flex; flex-direction: column; align-items: center; gap: 4px; padding: 6px 2px 0 0; color: #fff; text-align: center; text-shadow: 1px 1px 2px #000, 0 0 2px rgba(0, 0, 0, .8); }
    .shortcut span { width: 75px; display: flex; justify-content: center; }
    .main { position: absolute; left: 122px; right: 102px; top: 79px; bottom: 59px; }
    .second { position: absolute; left: 692px; right: -200px; top: 176px; bottom: 0; }
    .pointer { position: absolute; left: 444px; top: 375px; }
    .taskbar {
      height: 30px; flex: none; display: flex; align-items: center; border-top: 1px solid #5e7b9c; padding-left: 11px;
      box-shadow: inset 0 1px 0 #c6d8ea; color: #fff;
      background: linear-gradient(90deg, #8ba4c0 0, #a2b8ce 60px, #a8bed6 30%, #a5c2e0 60%, #9ab5d2 70%, #7088a7 78%, #7a8fac 100%);
    }
    .task { width: 45px; height: 30px; }
    .task.open { width: 39px; height: 29px; margin: 0 8px 0 16px; border: 1px solid #6f87a2; border-radius: 3px; box-shadow: inset 0 0 0 1px #fff, 3px 0 0 #dbe5ef, 4px 0 0 #6f87a2; background: linear-gradient(180deg, #edf3f8, #cfdce9); }
    .tray { margin-left: auto; display: flex; align-items: center; gap: 8px; }
    .clock { margin: 0 14px 0 19px; }
    .show { width: 15px; height: 29px; border: 1px solid #4d6078; border-right: 0; background: linear-gradient(100deg, #8c9cb0, #44566e 60%, #7186a0); }
  `];

  render() {
    return html`<div class="screen">
      <main class="desktop">
        <svg class="rays" viewBox="0 0 1024 738" preserveAspectRatio="none" fill="none" aria-hidden="true">
          <path d="M-5 112Q60 142 135 163" stroke="#b9d4f2" stroke-width="1.500" />
          <path d="M-5 112Q60 142 135 163" stroke="#6fa0dc" stroke-opacity=".25" stroke-width="6" />
          <path d="M0 140Q60 160 135 185" stroke="#6fa0dc" stroke-opacity=".12" stroke-width="5" />
          <path d="M513 0Q526 36 545 78" stroke="#6fb0d8" stroke-opacity=".7" />
          <path d="M405 0 480 0 545 80 470 80Z" fill="#4d8fd0" fill-opacity=".06" />
        </svg>
        <div class="icons">${shortcuts.map(([i, t]) => html`<a class="shortcut" href="#${t}">${icon(i, 32)}<span>${t}</span></a>`)}</div>
        <program-window class="second"></program-window>
        <explorer-window class="main"></explorer-window>
        <svg class="pointer" width="30" height="30" viewBox="0 0 30 30" aria-hidden="true">
          <circle cx="15" cy="10" r="7" fill="none" stroke="#4aaeb4" stroke-width="4" /><path d="M15 3a7 7 0 0 1 7 7" fill="none" stroke="#a6dfe6" stroke-width="3" />
          <path d="M1 8V25L5 21.500 8 28 11 27 8.500 20.500H13z" fill="#fff" stroke="#333" />
        </svg>
      </main>
      <footer class="taskbar">
        <button aria-label="Start"><svg width="32" height="32" viewBox="0 0 32 32"><circle cx="16" cy="16" r="16" fill="#1f4a70" /><circle cx="16" cy="16" r="14.500" fill="#2c7199" />
          <ellipse cx="16" cy="8" rx="12" ry="7" fill="#8fb1c9" /><ellipse cx="16" cy="27" rx="9" ry="4" fill="#3ec3e4" />
          <path d="M8 9q4-2.500 7.500-.5L14 15q-3-2-7.500 0z" fill="#f0682c" /><path d="M17 9q4 2 7.500 0L23 16q-4 2-7.500 0z" fill="#8ccc3c" />
          <path d="M6 17q4-2.500 7.500 0L12 24q-4-2-7.500 0z" fill="#3fa6e6" /><path d="M15 17.500q4 2 7.500 0L21 24.500q-4 2-7.500 0z" fill="#fbcb33" /></svg></button>
        <button class="task open" aria-label="Explorer">${icon("libraries", 18)}</button>
        <button class="task" aria-label="Internet Explorer">${icon("ie", 17)}</button>
        <button class="task" aria-label="UniKey">${icon("unikey", 16)}</button>
        <button class="task" aria-label="Ghost">${icon("ghost", 18)}</button>
        <div class="tray">${[1, 2, 3, 4, 5, 6].map((n) => icon(`tray${n}`, 16))}</div>
        <time class="clock">9:06 AM</time>
        <button class="show" aria-label="Show desktop"></button>
      </footer>
    </div>`;
  }
}
